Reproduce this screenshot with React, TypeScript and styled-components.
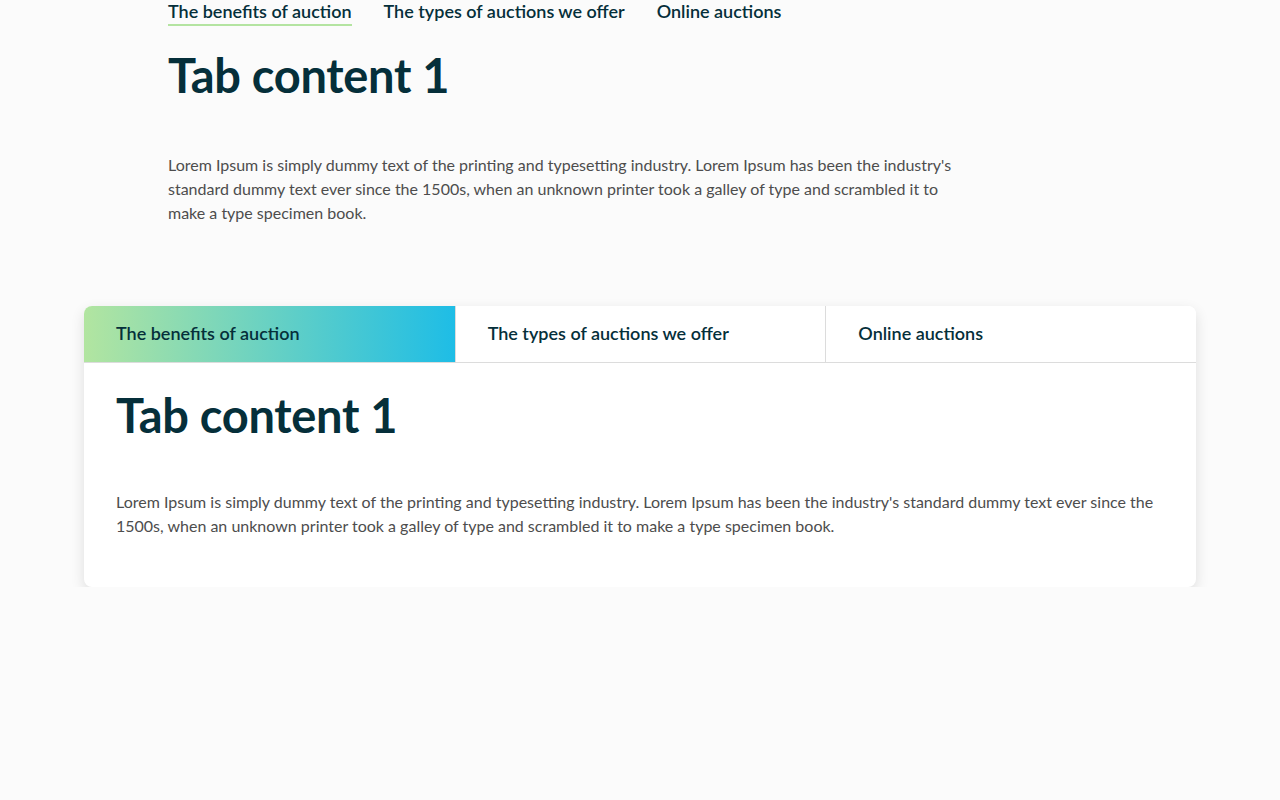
import styled, { createGlobalStyle } from 'styled-components';
import { useState } from 'react';

const tabs = ['The benefits of auction', 'The types of auctions we offer', 'Online auctions'];
const lorem =
  "Lorem Ipsum is simply dummy text of the printing and typesetting industry. Lorem Ipsum has been the industry's standard dummy text ever since the 1500s, when an unknown printer took a galley of type and scrambled it to make a type specimen book.";

const GlobalStyle = createGlobalStyle`
  body {
    margin: 0;
    background: #fbfbfb;
    font-family: Lato, "Noto Sans", sans-serif;
    color: #052f3a;
  }
`;

const Page = styled.div`
  display: flex;
  flex-direction: column;
  align-items: center;
`;

const Simple = styled.section`
  width: 944px;
`;

const LinkTabs = styled.div`
  display: flex;
  gap: 32px;
`;

const LinkTab = styled.button<{ $active: boolean }>`
  background: none;
  border: 0;
  padding: 0 0 1px;
  font-family: inherit;
  font-size: 18px;
  font-weight: 600;
  line-height: 23px;
  color: #052f3a;
  cursor: pointer;
  border-bottom: 2px solid ${(p) => (p.$active ? '#b4e4a1' : 'transparent')};
`;

const Heading = styled.h1`
  margin: 0;
  font-size: 47px;
  font-weight: 700;
  line-height: 60px;
  letter-spacing: -0.3px;
  color: #052f3a;
`;

const Text = styled.p<{ $width?: string }>`
  margin: 0;
  max-width: ${(p) => p.$width || 'none'};
  font-size: 16px;
  line-height: 24px;
  color: #4d4d4d;
`;

const SimpleHeading = styled(Heading)`
  margin-top: 19px;
  margin-bottom: 48px;
`;

const Card = styled.section`
  width: 1112px;
  margin-top: 81px;
  background: #fff;
  border-radius: 8px;
  box-shadow: 0 5px 14px rgba(0, 0, 0, 0.12);
  overflow: hidden;
`;

const CardTabs = styled.div`
  display: grid;
  grid-template-columns: repeat(3, 1fr);
  border-bottom: 1px solid #dcdcdc;
`;

const CardTab = styled.button<{ $active: boolean }>`
  height: 56px;
  padding: 0 32px 2px;
  text-align: left;
  border: 0;
  border-left: 1px solid #dcdcdc;
  font-family: inherit;
  font-size: 18px;
  font-weight: 600;
  color: #052f3a;
  cursor: pointer;
  background: ${(p) => (p.$active ? 'linear-gradient(90deg, #b2e5a0 0%, #1ebde6 100%)' : '#fff')};
  &:first-child {
    border-left: 0;
  }
`;

const CardBody = styled.div`
  padding: 22px 32px 49px;
`;

const CardHeading = styled(Heading)`
  margin-bottom: 45px;
`;

export default function App() {
  const [top, setTop] = useState(0);
  const [card, setCard] = useState(0);
  return (
    <Page>
      <GlobalStyle />
      <Simple>
        <LinkTabs>
          {tabs.map((t, i) => (
            <LinkTab key={t} $active={top === i} onClick={() => setTop(i)}>
              {t}
            </LinkTab>
          ))}
        </LinkTabs>
        <SimpleHeading>Tab content {top + 1}</SimpleHeading>
        <Text $width="790px">{lorem}</Text>
      </Simple>
      <Card>
        <CardTabs>
          {tabs.map((t, i) => (
            <CardTab key={t} $active={card === i} onClick={() => setCard(i)}>
              {t}
            </CardTab>
          ))}
        </CardTabs>
        <CardBody>
          <CardHeading>Tab content {card + 1}</CardHeading>
          <Text>{lorem}</Text>
        </CardBody>
      </Card>
    </Page>
  );
}
